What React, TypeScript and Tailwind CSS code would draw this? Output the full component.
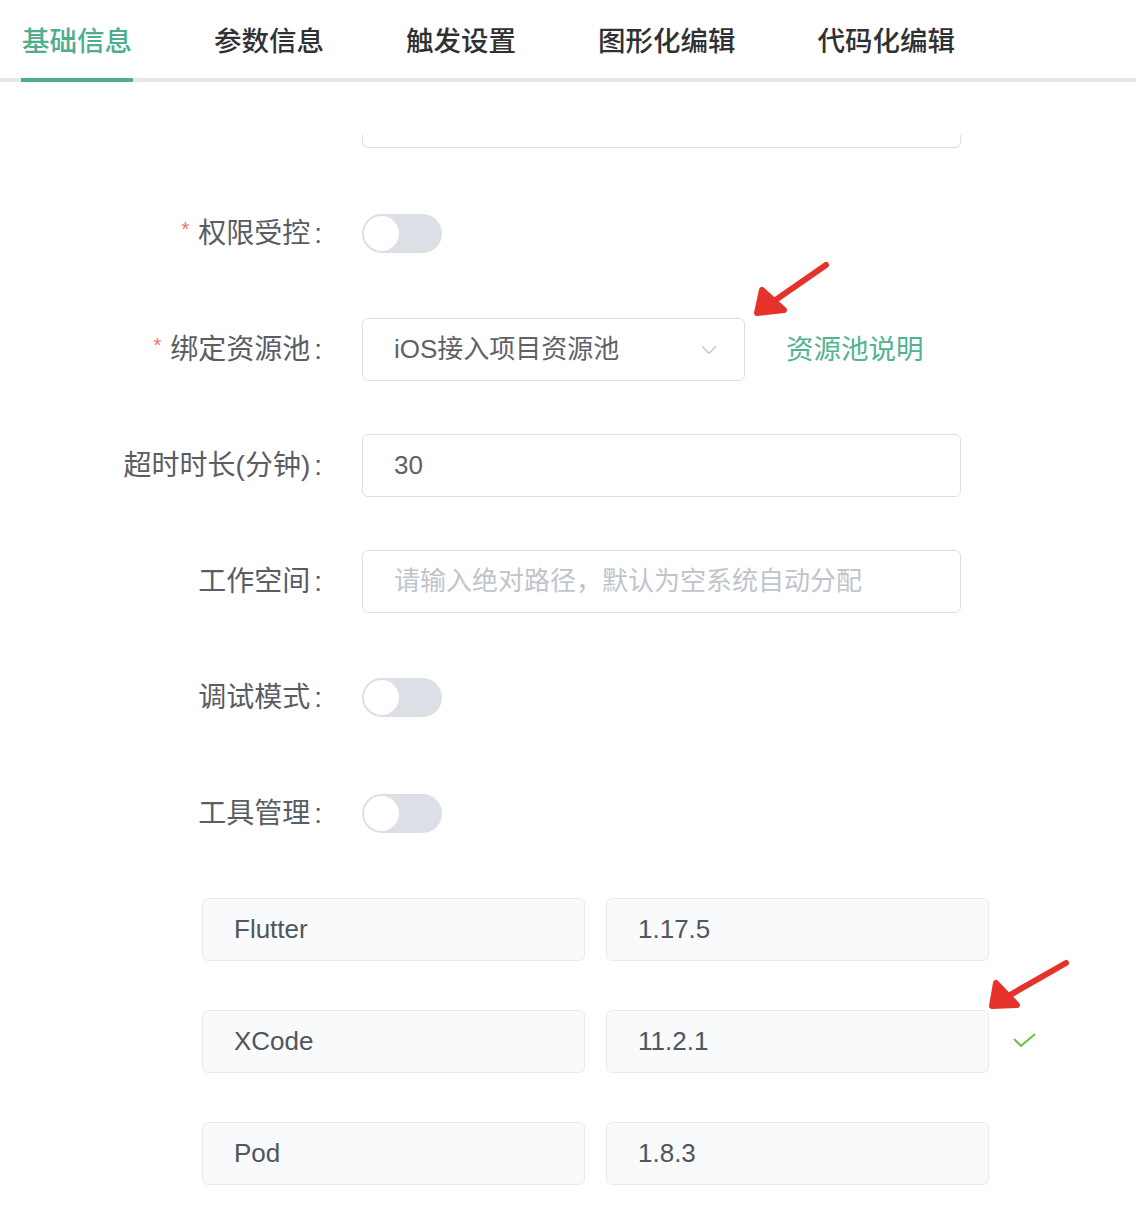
import { ChevronDown } from "lucide-react"

const tabs = ["基础信息", "参数信息", "触发设置", "图形化编辑", "代码化编辑"]

const tools = [
  { name: "Flutter", version: "1.17.5", ok: false },
  { name: "XCode", version: "11.2.1", ok: true },
  { name: "Pod", version: "1.8.3", ok: false },
]

function Label({ text, required }: { text: string; required?: boolean }) {
  return (
    <div className="w-[322px] flex justify-end items-center text-[28px] text-[#5a5d63] shrink-0">
      {required && <span className="text-[#f56c6c] text-[20px] mr-[9px] -mt-[10px]">*</span>}
      <span>{text}</span>
      <span className="ml-[4px]">:</span>
    </div>
  )
}

function Switch() {
  return (
    <div className="w-[80px] h-[39px] rounded-full bg-[#dcdfe6] flex items-center px-[2px]">
      <div className="w-[35px] h-[35px] rounded-full bg-white" />
    </div>
  )
}

function Arrow({ left, top, w, h, tail, tip, barbs }: {
  left: number; top: number; w: number; h: number
  tail: [number, number]; tip: [number, number]; barbs: [number, number][]
}) {
  return (
    <svg className="absolute" style={{ left, top }} width={w} height={h}>
      <g stroke="#e5322b" strokeWidth="6" strokeLinecap="round" strokeLinejoin="round" fill="#e5322b">
        <line x1={tail[0]} y1={tail[1]} x2={tip[0] + 4} y2={tip[1] - 3} />
        <polygon points={`${barbs[0][0]},${barbs[0][1]} ${tip[0]},${tip[1]} ${barbs[1][0]},${barbs[1][1]}`} />
      </g>
    </svg>
  )
}

export default function App() {
  return (
    <div
      className="relative w-[1136px] min-h-[1222px] bg-white overflow-hidden"
      style={{ fontFamily: '"Liberation Sans", "Noto Sans CJK SC", sans-serif' }}
    >
      {/* tabs */}
      <div className="flex pl-[21px] gap-[80px] border-b-[4px] border-[#e4e7ed]">
        {tabs.map((t, i) => (
          <div
            key={t}
            className={
              "text-[27.5px] leading-[28px] pt-[28px] pb-[22px] -mb-[4px] border-b-[4px] font-medium px-[1px] " +
              (i === 0 ? "border-[#4fae8e] text-[#4fae8e]" : "border-transparent text-[#303133]")
            }
          >
            {t}
          </div>
        ))}
      </div>

      {/* form */}
      <div className="mt-[53px] overflow-hidden">
        <div className="flex">
          <div className="w-[322px] shrink-0" />
          <div className="ml-[40px] w-[599px] h-[63px] -mt-[50px] border border-[#dcdfe6] rounded-[6px]" />
        </div>

        <div className="flex flex-col gap-[53px] mt-[54px]">
          <div className="flex items-center h-[63px]">
            <Label text="权限受控" required />
            <div className="ml-[40px]">
              <Switch />
            </div>
          </div>

          <div className="flex items-center h-[63px]">
            <Label text="绑定资源池" required />
            <div className="ml-[40px] w-[383px] h-[63px] border border-[#dcdfe6] rounded-[6px] flex items-center pl-[31px] pr-[22px] text-[26px] text-[#606266]">
              <span className="flex-1">iOS接入项目资源池</span>
              <ChevronDown className="w-[26px] h-[26px] text-[#c0c4cc]" strokeWidth={1.2} />
            </div>
            <span className="ml-[41px] text-[27.5px] text-[#52b393]">资源池说明</span>
          </div>

          <div className="flex items-center h-[63px]">
            <Label text="超时时长(分钟)" />
            <div className="ml-[40px] w-[599px] h-[63px] border border-[#dcdfe6] rounded-[6px] flex items-center pl-[31px] text-[26px] text-[#606266]">
              30
            </div>
          </div>

          <div className="flex items-center h-[63px]">
            <Label text="工作空间" />
            <div className="ml-[40px] w-[599px] h-[63px] border border-[#dcdfe6] rounded-[6px] flex items-center pl-[31px] text-[26px] text-[#c0c4cc]">
              请输入绝对路径，默认为空系统自动分配
            </div>
          </div>

          <div className="flex items-center h-[63px]">
            <Label text="调试模式" />
            <div className="ml-[40px]">
              <Switch />
            </div>
          </div>

          <div className="flex items-center h-[63px]">
            <Label text="工具管理" />
            <div className="ml-[40px]">
              <Switch />
            </div>
          </div>
        </div>

        {/* tools */}
        <div className="flex flex-col gap-[49px] mt-[53px] pl-[202px]">
          {tools.map((t) => (
            <div key={t.name} className="flex items-center">
              <div className="w-[383px] h-[63px] bg-[#f9fafc] border border-[#e8eaef] rounded-[6px] flex items-center pl-[31px] text-[26px] text-[#50555e]">
                {t.name}
              </div>
              <div className="ml-[21px] w-[383px] h-[63px] bg-[#f9fafc] border border-[#e8eaef] rounded-[6px] flex items-center pl-[31px] text-[26px] text-[#50555e]">
                {t.version}
              </div>
              {t.ok && (
                <svg className="ml-[24px] -mt-[3px]" width="23" height="16" viewBox="0 0 23 16">
                  <polyline points="1,7 8,14 22,2" fill="none" stroke="#67c23a" strokeWidth="2" />
                </svg>
              )}
            </div>
          ))}
        </div>
      </div>

      {/* annotations */}
      <Arrow left={745} top={255} w={95} h={70} tail={[81, 10]} tip={[12, 58]} barbs={[[17, 35], [39, 55]]} />
      <Arrow left={980} top={952} w={100} h={65} tail={[86, 11]} tip={[12, 54]} barbs={[[16, 31], [37, 53]]} />
    </div>
  )
}
